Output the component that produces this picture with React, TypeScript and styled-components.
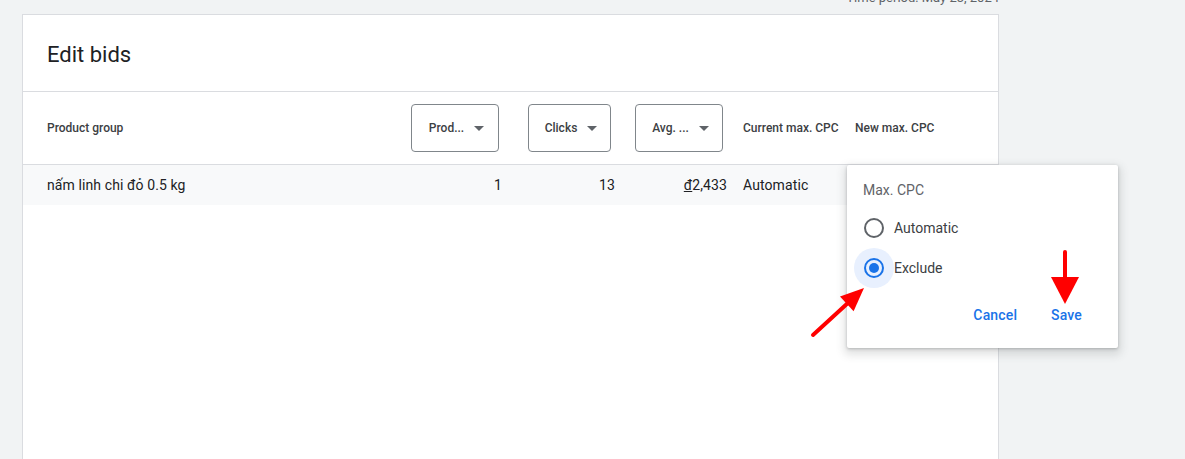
import React from "react";
import styled, { createGlobalStyle } from "styled-components";

const GlobalStyle = createGlobalStyle`
  html, body { margin: 0; padding: 0; background: #f1f3f4; }
  body { font-family: Roboto, "Noto Sans", Arial, sans-serif; -webkit-font-smoothing: antialiased; }
  * { box-sizing: border-box; }
`;

const Page = styled.div`
  position: relative;
  width: 1185px;
  height: 459px;
  overflow: hidden;
  padding-left: 22px;
`;

const TimeRow = styled.div`
  width: 977px;
  height: 14px;
  display: flex;
  justify-content: flex-end;
`;

const TimeText = styled.div`
  margin-top: -11px;
  font-size: 13px;
  line-height: 18px;
  color: #5f6368;
`;

const Card = styled.div`
  width: 977px;
  height: 460px;
  background: #fff;
  border: 1px solid #dadce0;
  border-bottom: none;
`;

const CardHeader = styled.div`
  height: 77px;
  padding: 26px 0 0 24px;
  border-bottom: 1px solid #dadce0;
`;

const Title = styled.h1`
  margin: 0;
  font-size: 22px;
  font-weight: 400;
  line-height: 28px;
  color: #202124;
`;

const Row = styled.div<{ $header?: boolean }>`
  display: grid;
  grid-template-columns: 364px 117px 107px 108px 112px 1fr;
  align-items: center;
  padding-left: 24px;
  height: ${(p) => (p.$header ? "73px" : "40px")};
  background: ${(p) => (p.$header ? "#fff" : "#f8f9fa")};
  border-bottom: ${(p) => (p.$header ? "1px solid #dadce0" : "none")};
`;

const HeadLabel = styled.div`
  font-size: 12px;
  font-weight: 500;
  color: #3c4043;
  white-space: nowrap;
`;

const Dropdown = styled.div<{ $w: number }>`
  width: ${(p) => p.$w}px;
  height: 48px;
  border: 1px solid #80868b;
  border-radius: 4px;
  display: flex;
  align-items: center;
  justify-content: center;
  gap: 10px;
  padding-left: 3px;
  font-size: 12px;
  font-weight: 500;
  color: #3c4043;
`;

const Caret = styled.span`
  width: 0;
  height: 0;
  border-left: 5px solid transparent;
  border-right: 5px solid transparent;
  border-top: 5px solid #5f6368;
`;

const Cell = styled.div<{ $pr?: number }>`
  font-size: 14px;
  color: #202124;
  white-space: nowrap;
  letter-spacing: 0.1px;
  text-align: ${(p) => (p.$pr !== undefined ? "right" : "left")};
  padding-right: ${(p) => p.$pr ?? 0}px;
`;

const Currency = styled.span`
  text-decoration: underline;
  text-underline-offset: 1px;
`;

const Popover = styled.div`
  position: absolute;
  left: 847px;
  top: 165px;
  width: 271px;
  height: 183px;
  background: #fff;
  border-radius: 2px;
  box-shadow: 0 1px 3px rgba(60, 64, 67, 0.3), 0 4px 8px 3px rgba(60, 64, 67, 0.15);
  padding: 15px 0 0 7px;
`;

const PopTitle = styled.div`
  padding-left: 9px;
  font-size: 14px;
  line-height: 20px;
  color: #5f6368;
  margin-bottom: 8px;
`;

const RadioRow = styled.label`
  display: flex;
  align-items: center;
  height: 40px;
  font-size: 14px;
  color: #3c4043;
`;

const RadioTouch = styled.span<{ $on?: boolean }>`
  width: 40px;
  height: 40px;
  border-radius: 50%;
  display: flex;
  align-items: center;
  justify-content: center;
  background: ${(p) => (p.$on ? "#e8f0fe" : "transparent")};
`;

const RadioCircle = styled.span<{ $on?: boolean }>`
  width: 20px;
  height: 20px;
  border-radius: 50%;
  border: 2px solid ${(p) => (p.$on ? "#1a73e8" : "#5f6368")};
  display: flex;
  align-items: center;
  justify-content: center;
  &::after {
    content: "";
    width: 10px;
    height: 10px;
    border-radius: 50%;
    background: ${(p) => (p.$on ? "#1a73e8" : "transparent")};
  }
`;

const Actions = styled.div`
  display: flex;
  justify-content: flex-end;
  gap: 18px;
  padding-right: 28px;
  margin-top: 15px;
`;

const TextButton = styled.button`
  border: none;
  background: transparent;
  padding: 0 8px;
  height: 24px;
  font-family: inherit;
  font-size: 14px;
  font-weight: 500;
  letter-spacing: 0.15px;
  color: #1a73e8;
  cursor: pointer;
`;

const Overlay = styled.svg`
  position: absolute;
  left: 0;
  top: 0;
  width: 1185px;
  height: 459px;
  pointer-events: none;
`;

export default function App() {
  return (
    <>
      <GlobalStyle />
      <Page>
        <TimeRow>
          <TimeText>Time period: May 23, 2024</TimeText>
        </TimeRow>
        <Card>
          <CardHeader>
            <Title>Edit bids</Title>
          </CardHeader>
          <Row $header>
            <HeadLabel>Product group</HeadLabel>
            <div>
              <Dropdown $w={88}>
                Prod... <Caret />
              </Dropdown>
            </div>
            <div>
              <Dropdown $w={83}>
                Clicks <Caret />
              </Dropdown>
            </div>
            <div>
              <Dropdown $w={88}>
                Avg. ... <Caret />
              </Dropdown>
            </div>
            <HeadLabel>Current max. CPC</HeadLabel>
            <HeadLabel>New max. CPC</HeadLabel>
          </Row>
          <Row>
            <Cell>nấm linh chi đỏ 0.5 kg</Cell>
            <Cell $pr={26}>1</Cell>
            <Cell $pr={20}>13</Cell>
            <Cell $pr={16}>
              <Currency>đ</Currency>2,433
            </Cell>
            <Cell>Automatic</Cell>
            <Cell />
          </Row>
        </Card>

        <Popover>
          <PopTitle>Max. CPC</PopTitle>
          <RadioRow>
            <RadioTouch>
              <RadioCircle />
            </RadioTouch>
            Automatic
          </RadioRow>
          <RadioRow>
            <RadioTouch $on>
              <RadioCircle $on />
            </RadioTouch>
            Exclude
          </RadioRow>
          <Actions>
            <TextButton>Cancel</TextButton>
            <TextButton>Save</TextButton>
          </Actions>
        </Popover>

        <Overlay viewBox="0 0 1185 459">
          <line x1="813" y1="335" x2="849" y2="302" stroke="#f00" strokeWidth="4" strokeLinecap="round" />
          <polygon points="864,288 853.6,311.3 840,296.5" fill="#f00" />
          <line x1="1065" y1="252" x2="1065" y2="280" stroke="#f00" strokeWidth="4" strokeLinecap="round" />
          <polygon points="1051,277 1079,277 1065,304" fill="#f00" />
        </Overlay>
      </Page>
    </>
  );
}
